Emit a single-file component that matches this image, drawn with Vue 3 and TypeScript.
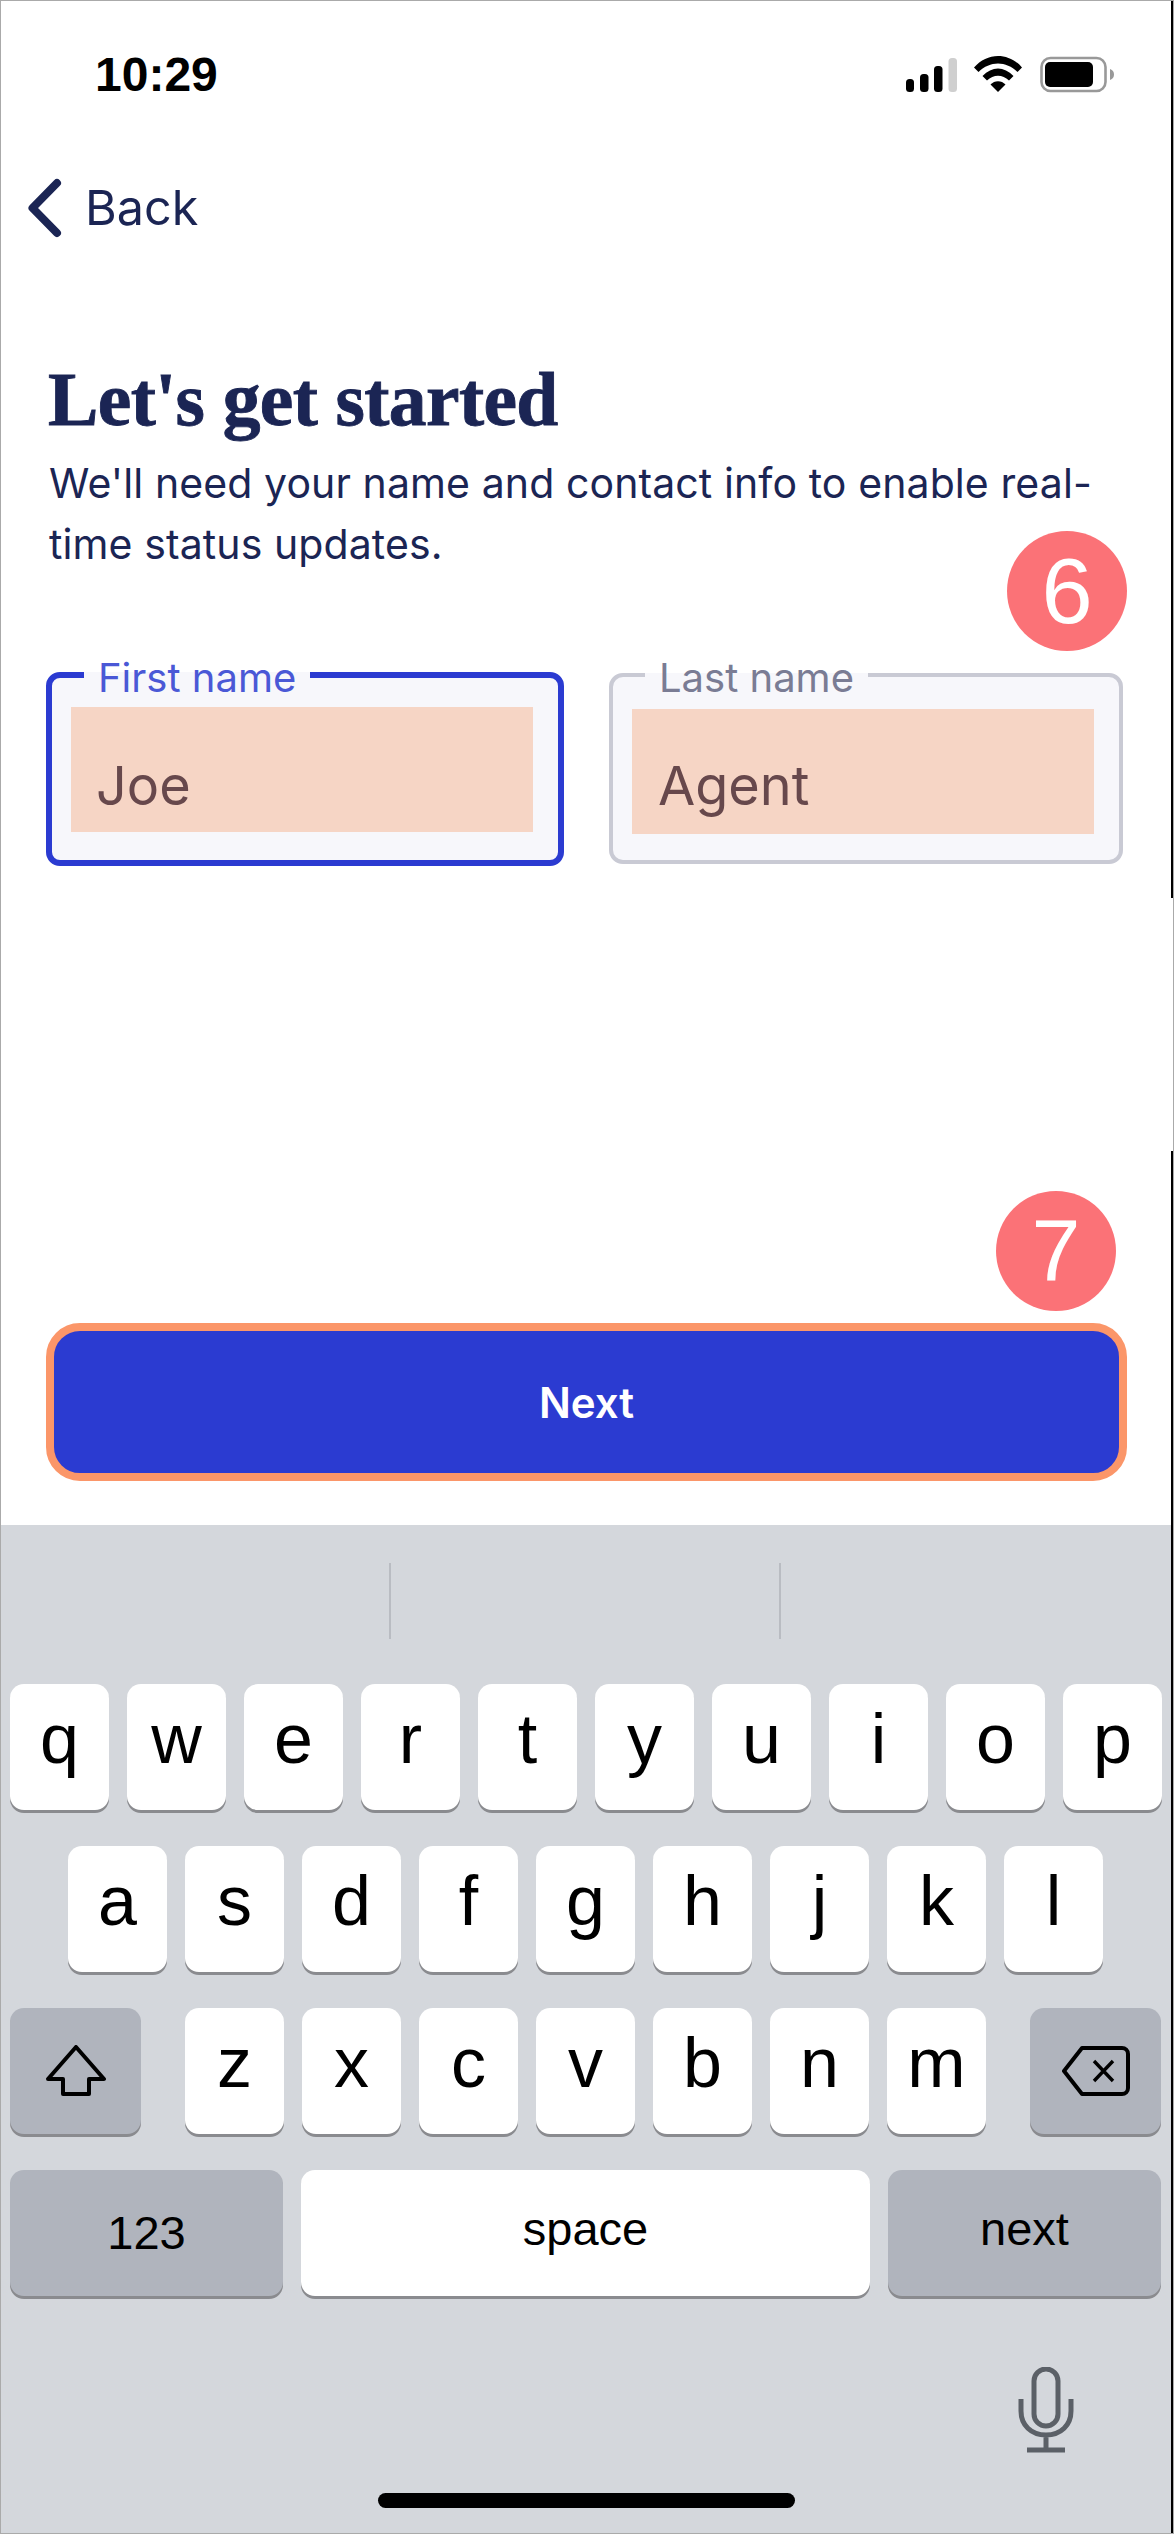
<script setup lang="ts">
const rows: string[] = ['qwertyuiop', 'asdfghjkl', 'zxcvbnm']
const row1 = rows[0].split('')
const row2 = rows[1].split('')
const row3 = rows[2].split('')
</script>

<template>
  <div class="page">
    <i class="edge edge-top"></i>
    <i class="edge edge-bottom"></i>
    <header class="status">
      <span class="time">10:29</span>
      <svg class="status-icons" width="212" height="40" viewBox="906 54 212 40">
        <rect x="908" y="79" width="8" height="13" rx="3.5" fill="#000" />
        <rect x="922" y="74" width="8.5" height="18" rx="3.5" fill="#000" />
        <rect x="936" y="66" width="8.5" height="26" rx="3.5" fill="#000" />
        <rect x="950.5" y="58" width="8.5" height="34" rx="3.5" fill="#cfcfcf" />
        <path d="M976 67.5C989 52 1011 52 1024 67.5L1019.5 72C1008 60.5 992 60.5 980.5 72Z" fill="#000" />
        <path d="M984.5 76C994 66 1006 66 1015.5 76L1011 80.5C1004.5 74 995.5 74 989 80.5Z" fill="#000" />
        <path d="M992.5 84.5C996.5 80 1003.5 80 1007.5 84.5L1000 92Z" fill="#000" />
        <rect x="1043.5" y="58" width="64" height="33" rx="9" fill="none" stroke="#999" stroke-width="2.6" />
        <rect x="1047" y="62" width="48" height="25" rx="5" fill="#000" />
        <path d="M1112 69C1115 70 1116 72 1116 74.5C1116 77 1115 79 1112 80Z" fill="#999" />
      </svg>
    </header>

    <nav class="back">
      <svg class="chevron" width="36" height="60" viewBox="0 0 36 60">
        <path d="M31 5L6.5 30L31 55" fill="none" stroke="#1b2554" stroke-width="8" stroke-linecap="round" stroke-linejoin="round" />
      </svg>
      <span class="back-label">Back</span>
    </nav>

    <main class="intro">
      <h1>Let's get started</h1>
      <p>We'll need your name and contact info to enable real-<br />time status updates.</p>
      <span class="badge badge-six">6</span>
      <div class="fields">
        <fieldset class="field field-active">
          <legend>First name</legend>
          <div class="value">Joe</div>
        </fieldset>
        <fieldset class="field">
          <legend>Last name</legend>
          <div class="value">Agent</div>
        </fieldset>
      </div>
    </main>

    <div class="action">
      <span class="badge badge-seven">7</span>
      <button class="next" type="button">Next</button>
    </div>

    <section class="keyboard">
      <div class="suggestions"><i></i><i></i></div>
      <div class="keys">
        <div class="row">
          <span v-for="k in row1" :key="k" class="key">{{ k }}</span>
        </div>
        <div class="row row-center">
          <span v-for="k in row2" :key="k" class="key">{{ k }}</span>
        </div>
        <div class="row row-third">
          <span class="key fn wide">
            <svg width="60" height="52" viewBox="0 0 60 52">
              <path d="M30 2L58 34H43V49H17V34H2Z" fill="none" stroke="#000" stroke-width="4" stroke-linejoin="round" />
            </svg>
          </span>
          <div class="letters">
            <span v-for="k in row3" :key="k" class="key">{{ k }}</span>
          </div>
          <span class="key fn wide">
            <svg width="68" height="50" viewBox="0 0 68 50">
              <path d="M20 2H60A6 6 0 0 1 66 8V42A6 6 0 0 1 60 48H20L2 25Z" fill="none" stroke="#000" stroke-width="4" stroke-linejoin="round" />
              <path d="M32 15L51 35M51 15L32 35" fill="none" stroke="#000" stroke-width="3.4" />
            </svg>
          </span>
        </div>
        <div class="row row-bottom">
          <span class="key fn label digits">123</span>
          <span class="key label">space</span>
          <span class="key fn label">next</span>
        </div>
      </div>
      <div class="mic-row">
        <svg width="56" height="86" viewBox="0 0 56 86">
          <rect x="16" y="2" width="24" height="57" rx="12" fill="none" stroke="#5b6067" stroke-width="5" />
          <path d="M3 32V44C3 58 13 68 28 68C43 68 53 58 53 44V32M28 68V83M9 83H47" fill="none" stroke="#5b6067" stroke-width="5" />
        </svg>
      </div>
      <div class="home-bar"></div>
    </section>
  </div>
</template>

<style>
html, body { margin: 0; background: #fff; }
</style>

<style scoped>
.page {
  position: relative;
  box-sizing: border-box;
  width: 1174px;
  height: 2534px;
  border: 1px solid #aaa;
  display: flex;
  flex-direction: column;
  font-family: "Liberation Sans", Arial, sans-serif;
  background: #fff;
  overflow: hidden;
}
.edge {
  position: absolute;
  right: 0;
  width: 2px;
  background: #000;
  z-index: 2;
}
.edge-top { top: 0; height: 897px; }
.edge-bottom { top: 1150px; bottom: 0; }
.status {
  height: 120px;
  display: flex;
  justify-content: space-between;
  align-items: flex-start;
  padding: 0 57px 0 94px;
}
.time {
  margin-top: 44px;
  font-size: 48px;
  line-height: 60px;
  font-weight: 700;
  color: #000;
}
.status-icons { margin-top: 53px; }
.back {
  display: flex;
  align-items: center;
  gap: 23px;
  height: 60px;
  margin-top: 57px;
  padding-left: 25px;
  color: #1b2554;
  font-family: Inter, sans-serif;
  font-size: 48.5px;
}
.back-label { padding-bottom: 1px; }
.intro {
  position: relative;
  padding: 0 46px 0 45px;
}
h1 {
  margin: 122px 0 0 2px;
  font-family: "Liberation Serif", serif;
  font-size: 75.5px;
  line-height: 80px;
  font-weight: 700;
  color: #1b2554;
  letter-spacing: -0.6px;
  -webkit-text-stroke: 0.9px #1b2554;
}
p {
  margin: 13px 0 0 3px;
  font-family: Inter, sans-serif;
  font-size: 41px;
  line-height: 61px;
  letter-spacing: 0.1px;
  color: #1b2554;
  white-space: nowrap;
}
.badge {
  position: absolute;
  width: 120px;
  height: 120px;
  border-radius: 50%;
  background: #fb7277;
  color: #fff;
  font-size: 92px;
  line-height: 120px;
  text-align: center;
}
.badge-six { right: 46px; top: 293px; }
.fields {
  display: flex;
  align-items: flex-start;
  gap: 45px;
  margin-top: 80px;
}
.field {
  box-sizing: border-box;
  margin: 0;
  flex: none;
  width: 514px;
  height: 209px;
  padding: 0 25px 0 19px;
  border: 4px solid #c9cad4;
  border-radius: 14px;
  background: #f7f7fb;
  min-width: 0;
}
.field-active {
  width: 518px;
  height: 211px;
  border: 6px solid #2b3bd1;
}
legend {
  position: relative;
  top: 3px;
  margin-left: 13px;
  padding: 0 14px;
  font-family: Inter, sans-serif;
  font-size: 40px;
  line-height: 40px;
  color: #7a7c94;
}
.field-active legend { color: #4a58d6; }
.value {
  box-sizing: border-box;
  height: 125px;
  margin-top: 14px;
  padding: 47px 0 0 26px;
  background: #f6d5c5;
  font-family: Inter, sans-serif;
  font-size: 54px;
  line-height: 60px;
  color: #67484c;
}
.field-active .value { margin-top: 12px; padding: 49px 0 0 25px; }
.action {
  position: relative;
  margin-top: auto;
  padding: 0 46px 44px 45px;
}
.badge-seven { right: 57px; bottom: 214px; font-size: 88px; }
.next {
  display: block;
  box-sizing: border-box;
  width: 100%;
  height: 158px;
  border: 8px solid #fb9669;
  border-radius: 34px;
  background: #2b3bd1;
  color: #fff;
  font-family: Inter, sans-serif;
  font-size: 42px;
  font-weight: 600;
}
.keyboard {
  position: relative;
  height: 1008px;
  background: #d4d7dc;
}
.suggestions {
  height: 159px;
  display: flex;
  align-items: flex-start;
  gap: 388px;
  padding: 38px 0 0 388px;
  box-sizing: border-box;
}
.suggestions i {
  display: block;
  width: 2px;
  height: 76px;
  background: #b9bcc2;
}
.keys {
  display: flex;
  flex-direction: column;
  gap: 36px;
  padding: 0 11px 0 9px;
}
.row {
  display: flex;
  gap: 18px;
  height: 126px;
}
.row-center { justify-content: center; margin-right: 1px; }
.row-third { justify-content: space-between; margin-right: 1px; }
.letters { display: flex; gap: 18px; }
.row-bottom {
  display: grid;
  grid-template-columns: 273px 1fr 273px;
  margin-right: 1px;
}
.key {
  box-sizing: border-box;
  width: 99px;
  height: 126px;
  padding-bottom: 16px;
  display: flex;
  align-items: center;
  justify-content: center;
  border-radius: 14px;
  background: #fff;
  box-shadow: 0 3px 0 #8a8b8f;
  font-size: 70px;
  line-height: 78px;
  color: #000;
}
.fn { background: #b0b4bd; }
.wide { width: 131px; padding-bottom: 0; }
.label { width: auto; font-size: 47px; line-height: 54px; padding-bottom: 8px; }
.digits { padding-bottom: 0; }
.mic-row {
  position: absolute;
  left: 1017px;
  top: 842px;
}
.home-bar {
  position: absolute;
  left: 377px;
  top: 968px;
  width: 417px;
  height: 15px;
  border-radius: 8px;
  background: #000;
}
</style>
